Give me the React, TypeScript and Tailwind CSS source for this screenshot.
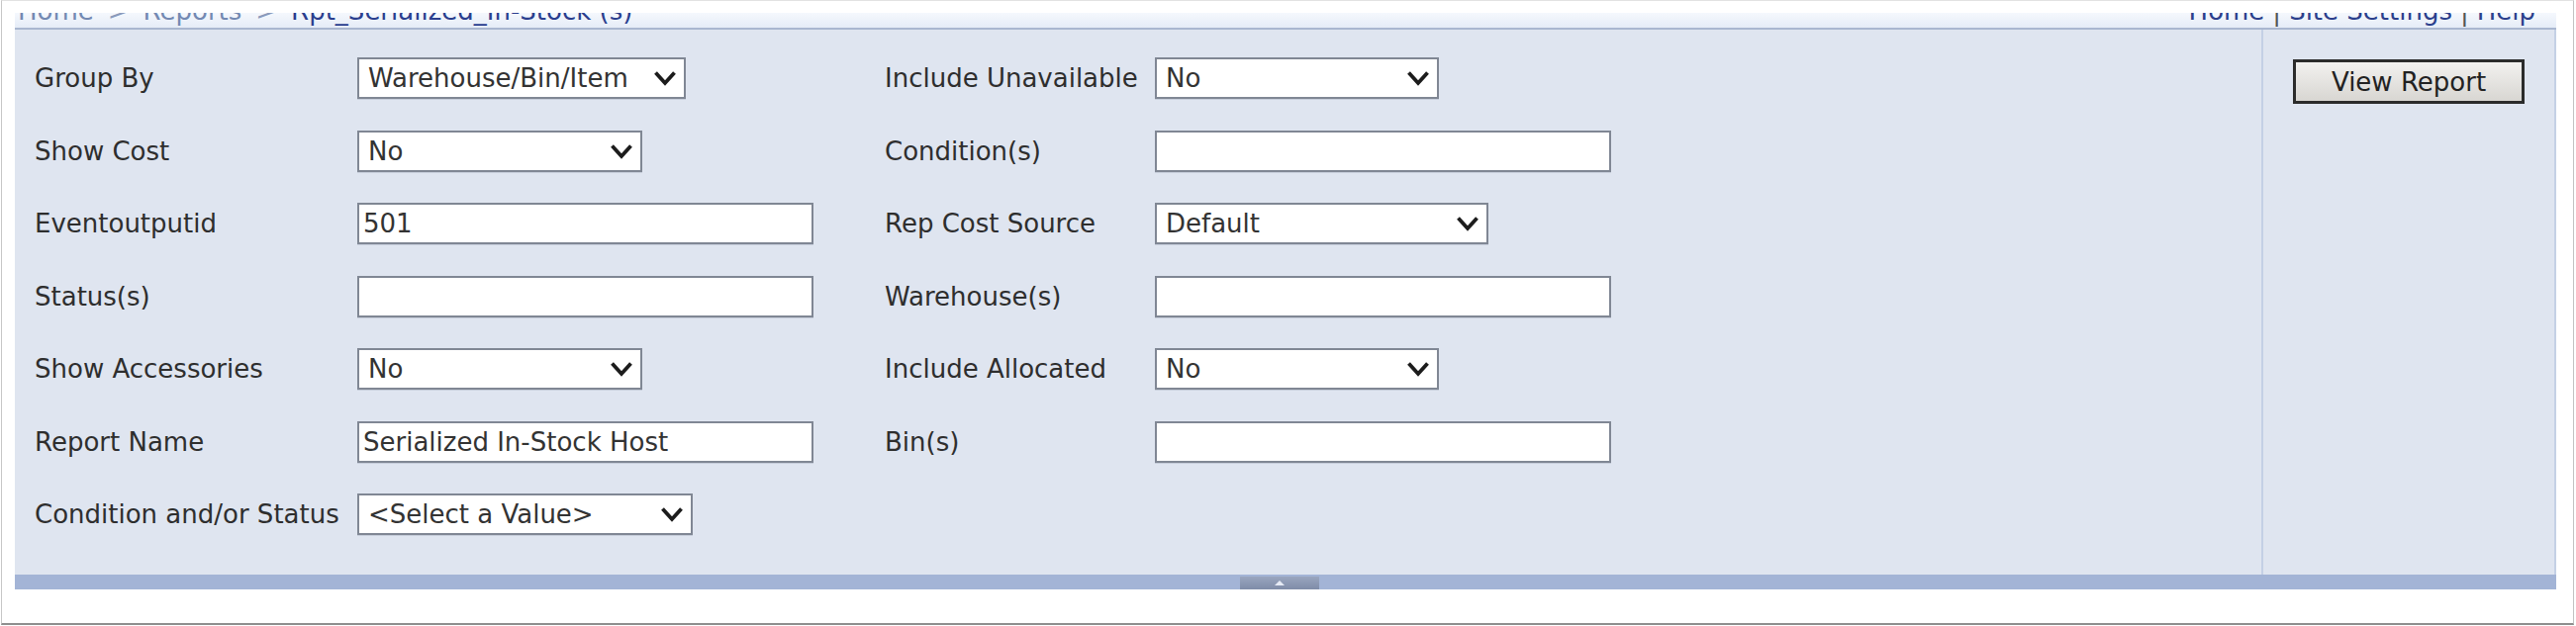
import React from "react";

function Chevron() {
  return (
    <svg width="24" height="16" viewBox="0 0 24 16" className="shrink-0">
      <polyline points="2.5,2.5 12,13 21.5,2.5" fill="none" stroke="#1c1c1c" strokeWidth="3.8" strokeLinejoin="miter" />
    </svg>
  );
}

function Sel({ text, w }: { text: string; w: string }) {
  return (
    <div className={`flex h-[42px] items-center justify-between border-2 border-[#808794] bg-white pl-[9px] pr-[7px] shadow-[0_1px_0_#c7cedb] ${w}`}>
      <span className="whitespace-nowrap text-[#333]">{text}</span>
      <Chevron />
    </div>
  );
}

function Inp({ text = "" }: { text?: string }) {
  return (
    <div className="flex h-[42px] w-[461px] items-center border-2 border-[#808794] bg-white pl-[4px] shadow-[0_1px_0_#c7cedb]">
      <span className="whitespace-nowrap text-[#333]">{text}</span>
    </div>
  );
}

function Label({ text }: { text: string }) {
  return <div className="flex h-[42px] items-center whitespace-nowrap text-[#2e2e2e]">{text}</div>;
}

export default function App() {
  return (
    <div className="h-[633px] w-[2603px] overflow-hidden bg-white font-['DejaVu_Sans',sans-serif] text-[26px] leading-none">
      <div className="ml-[1px] flex h-[632px] w-[2600px] flex-col border-t border-r border-l border-b-2 border-t-[#e2e2e2] border-r-[#c2c2c2] border-l-[#c6c6c6] border-b-[#8e8e8e] pt-[12px] pr-[16px] pl-[13px]">
        <div className="flex w-[2568px] flex-col">
          {/* breadcrumb strip (clipped at the top) */}
          <div className="h-[15px] overflow-hidden bg-linear-to-b from-[#f5f8fd] to-[#e5ecf7]">
            <div className="-mt-[15px] flex h-[30px] items-start justify-between pr-[21px] pl-[3px] leading-[26px]">
              <div className="flex gap-[14px] whitespace-nowrap">
                <span className="text-[#7389b2]">Home</span>
                <span className="text-[#8a9abb]">&gt;</span>
                <span className="text-[#7389b2]">Reports</span>
                <span className="text-[#8a9abb]">&gt;</span>
                <span className="text-[#2a3e8e]">Rpt_Serialized_In-Stock (s)</span>
              </div>
              <div className="flex gap-[8px] whitespace-nowrap">
                <span className="text-[#2b3f8c]">Home</span>
                <span className="text-[#555]">|</span>
                <span className="text-[#2b3f8c]">Site Settings</span>
                <span className="text-[#555]">|</span>
                <span className="text-[#2b3f8c]">Help</span>
              </div>
            </div>
          </div>
          <div className="h-[2px] bg-[#a9b7d0]" />

          {/* main panel */}
          <div className="flex h-[551px] bg-[#dfe5f0]">
            <div className="w-[2270px] pt-[28px] pl-[20px]">
              <div className="grid grid-cols-[326px_533px_273px_1fr] gap-y-[31.5px]">
                <Label text="Group By" />
                <div><Sel text="Warehouse/Bin/Item" w="w-[332px]" /></div>
                <Label text="Include Unavailable" />
                <div><Sel text="No" w="w-[287px]" /></div>

                <Label text="Show Cost" />
                <div><Sel text="No" w="w-[288px]" /></div>
                <Label text="Condition(s)" />
                <div><Inp /></div>

                <Label text="Eventoutputid" />
                <div><Inp text="501" /></div>
                <Label text="Rep Cost Source" />
                <div><Sel text="Default" w="w-[337px]" /></div>

                <Label text="Status(s)" />
                <div><Inp /></div>
                <Label text="Warehouse(s)" />
                <div><Inp /></div>

                <Label text="Show Accessories" />
                <div><Sel text="No" w="w-[288px]" /></div>
                <Label text="Include Allocated" />
                <div><Sel text="No" w="w-[287px]" /></div>

                <Label text="Report Name" />
                <div><Inp text="Serialized In-Stock Host" /></div>
                <Label text="Bin(s)" />
                <div><Inp /></div>

                <Label text="Condition and/or Status" />
                <div><Sel text="<Select a Value>" w="w-[339px]" /></div>
              </div>
            </div>
            <div className="w-[2px] bg-[#c4d0e5]" />
            <div className="flex w-[294px] justify-center pt-[30px]">
              <button className="flex h-[45px] w-[234px] items-center justify-center border-[3px] border-[#2b2b2b] bg-linear-to-b from-[#f2f1ef] to-[#d8d6d2] text-[26px] leading-none text-[#222]">
                View Report
              </button>
            </div>
            <div className="w-[2px] bg-[#c4d0e5]" />
          </div>

          {/* bottom splitter bar */}
          <div className="flex h-[15px] justify-center bg-[#a3b4d6] pr-[12px]">
            <div className="mt-[2px] flex h-[13px] w-[80px] items-center justify-center bg-linear-to-b from-[#9aa6bf] to-[#7f8ca8]">
              <svg width="10" height="5" viewBox="0 0 10 5">
                <polygon points="0,5 5,0 10,5" fill="#e6ebf5" />
              </svg>
            </div>
          </div>
        </div>
      </div>
    </div>
  );
}
